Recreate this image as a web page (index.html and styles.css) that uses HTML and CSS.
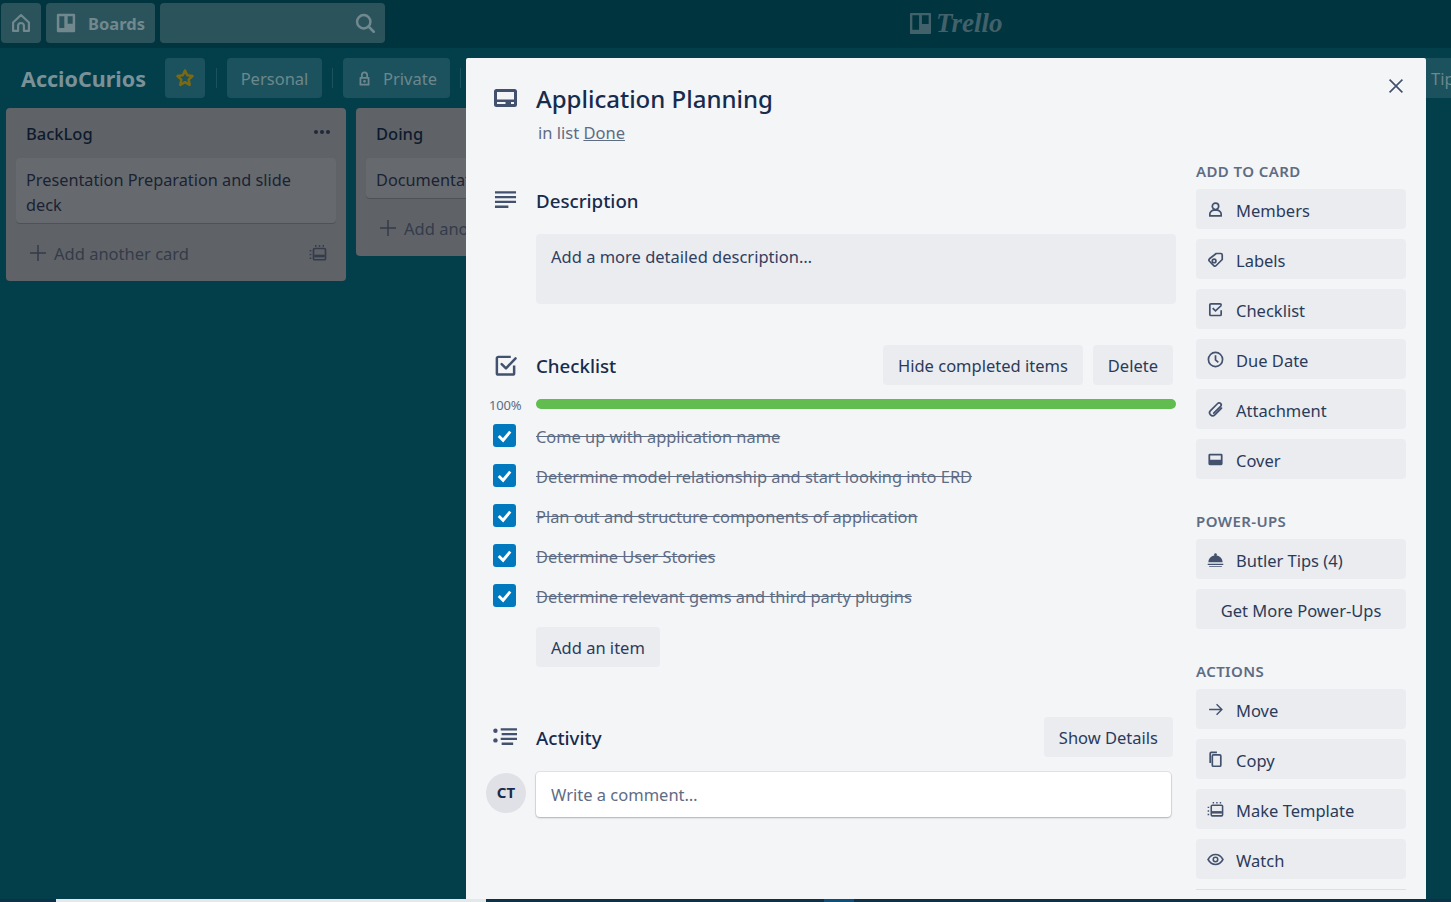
FILE: index.html

```html
<!DOCTYPE html>
<html lang="en">
<head>
  <meta charset="UTF-8">
  <title>Application Planning on AccioCurios | Trello</title>
  <link rel="stylesheet" href="styles.css">
</head>
<body>
  <header class="topbar">
    <div class="topbar-left">
      <a class="top-btn home-btn">
        <svg class="top-icon" viewBox="0 0 24 24" fill="none" stroke="currentColor" stroke-width="2.6"><path d="M2.500 11.500 12 2.500l9.500 9V21.500h-6v-6a3.500 3.500 0 0 0-7 0v6h-6z" stroke-linejoin="round"/></svg>
      </a>
      <a class="top-btn boards-btn">
        <svg class="top-icon" viewBox="0 0 24 24"><path fill="currentColor" fill-rule="evenodd" d="M2.500 1h19A1.500 1.500 0 0 1 23 2.500v19a1.500 1.500 0 0 1-1.500 1.500h-19A1.500 1.500 0 0 1 1 21.500v-19A1.500 1.500 0 0 1 2.500 1zM4 4v14h6V4zm10 0v9h6V4z"/></svg>
        <span>Boards</span>
      </a>
      <div class="top-search">
        <svg class="top-icon" viewBox="0 0 24 24" fill="none" stroke="currentColor" stroke-width="3"><circle cx="10.500" cy="10.500" r="8"/><path d="m16.500 16.500 6 6" stroke-linecap="round"/></svg>
      </div>
    </div>
    <div class="logo">
      <svg class="logo-mark" viewBox="0 0 24 24"><path fill="currentColor" fill-rule="evenodd" d="M2 1h20a1 1 0 0 1 1 1v20a1 1 0 0 1-1 1H2a1 1 0 0 1-1-1V2a1 1 0 0 1 1-1zm1.500 2.500v15h7v-15zm10 0v9h7v-9z"/></svg>
      <span>Trello</span>
    </div>
  </header>

  <div class="board-header">
    <span class="board-name">AccioCurios</span>
    <a class="board-btn star-btn">
      <svg class="star" viewBox="0 0 24 24" fill="none" stroke="currentColor" stroke-width="3"><path d="m12 3 2.700 5.800 6.300.8-4.600 4.300 1.200 6.300L12 17l-5.600 3.200 1.200-6.300L3 9.600l6.300-.8z" stroke-linejoin="round"/></svg>
    </a>
    <span class="board-sep"></span>
    <a class="board-btn personal-btn">Personal</a>
    <span class="board-sep"></span>
    <a class="board-btn private-btn">
      <svg class="lock" viewBox="0 0 24 24"><path fill="currentColor" fill-rule="evenodd" d="M7 10V7a5 5 0 0 1 10 0v3h1a1 1 0 0 1 1 1v10a1 1 0 0 1-1 1H6a1 1 0 0 1-1-1V11a1 1 0 0 1 1-1zm2.500 0h5V7a2.500 2.500 0 0 0-5 0zM7.500 12.500v7h9v-7zM12 14a2 2 0 1 1 0 4 2 2 0 0 1 0-4z"/></svg>
      Private
    </a>
    <span class="board-sep"></span>
    <a class="board-btn tips-btn">Tips</a>
  </div>

  <div class="lists">
    <section class="list">
      <div class="list-head">
        <h3>BackLog</h3>
        <span class="list-dots"><i></i><i></i><i></i></span>
      </div>
      <div class="list-card">Presentation Preparation and slide deck</div>
      <div class="list-foot">
        <svg class="plus" viewBox="0 0 16 16" fill="none" stroke="currentColor" stroke-width="1.500"><path d="M8 0v16M0 8h16"/></svg>
        <span>Add another card</span>
        <svg class="foot-icon" viewBox="0 0 24 24" fill="none" stroke="currentColor" stroke-width="2.200"><rect x="6" y="6" width="16" height="15" rx="1.500"/><path d="M7 16h14" stroke-width="3.500"/><path d="M8 2.500h2m3 0h2m3 0h2M2 8v2m0 3v2m0 3v2"/></svg>
      </div>
    </section>
    <section class="list">
      <div class="list-head">
        <h3>Doing</h3>
      </div>
      <div class="list-card">Documentation</div>
      <div class="list-foot">
        <svg class="plus" viewBox="0 0 16 16" fill="none" stroke="currentColor" stroke-width="1.500"><path d="M8 0v16M0 8h16"/></svg>
        <span>Add another card</span>
      </div>
    </section>
  </div>

  <div class="modal">
    <button class="modal-close" aria-label="Close">
      <svg viewBox="0 0 24 24" fill="none" stroke="currentColor" stroke-width="2"><path d="m5 5 14 14M19 5 5 19" stroke-linecap="square"/></svg>
    </button>

    <div class="card-title">
      <svg class="sec-icon title-icon" viewBox="0 0 23 18"><path fill="currentColor" fill-rule="evenodd" d="M2.500 0h18A2.500 2.500 0 0 1 23 2.500v13a2.500 2.500 0 0 1-2.500 2.500h-18A2.500 2.500 0 0 1 0 15.500v-13A2.500 2.500 0 0 1 2.500 0zM3 3v7.500h17V3zm0 10v2h8.500v-2zm14 0v2h3v-2z"/></svg>
      <div>
        <h2>Application Planning</h2>
        <p class="in-list">in list <a>Done</a></p>
      </div>
    </div>

    <div class="modal-body">
      <main class="modal-main">
        <section class="description">
          <div class="sec-head">
            <svg class="sec-icon" viewBox="0 0 24 24" fill="none" stroke="currentColor" stroke-width="2.400"><path d="M1 3.500h22M1 8.500h22M1 13.500h22M1 18.500h14"/></svg>
            <h3>Description</h3>
          </div>
          <div class="desc-box">Add a more detailed description…</div>
        </section>

        <section class="checklist">
          <div class="sec-head">
            <svg class="sec-icon" viewBox="0 0 24 24" fill="none" stroke="currentColor" stroke-width="2.600"><path d="M21 12v8a1.500 1.500 0 0 1-1.500 1.500h-15A1.500 1.500 0 0 1 3 20V4.500A1.500 1.500 0 0 1 4.500 3h13"/><path d="m8 10.500 4.500 4.500L22.500 4.500" stroke-linecap="round" stroke-linejoin="round"/></svg>
            <h3>Checklist</h3>
            <div class="sec-actions">
              <a class="btn">Hide completed items</a>
              <a class="btn">Delete</a>
            </div>
          </div>
          <div class="progress">
            <span class="progress-num">100%</span>
            <div class="progress-track"></div>
          </div>
          <ul class="items">
            <li><span class="tick"><svg viewBox="0 0 24 24" fill="none" stroke="#fff" stroke-width="3"><path d="m6 12.500 4.500 4.500L18 8"/></svg></span><s>Come up with application name</s></li>
            <li><span class="tick"><svg viewBox="0 0 24 24" fill="none" stroke="#fff" stroke-width="3"><path d="m6 12.500 4.500 4.500L18 8"/></svg></span><s>Determine model relationship and start looking into ERD</s></li>
            <li><span class="tick"><svg viewBox="0 0 24 24" fill="none" stroke="#fff" stroke-width="3"><path d="m6 12.500 4.500 4.500L18 8"/></svg></span><s>Plan out and structure components of application</s></li>
            <li><span class="tick"><svg viewBox="0 0 24 24" fill="none" stroke="#fff" stroke-width="3"><path d="m6 12.500 4.500 4.500L18 8"/></svg></span><s>Determine User Stories</s></li>
            <li><span class="tick"><svg viewBox="0 0 24 24" fill="none" stroke="#fff" stroke-width="3"><path d="m6 12.500 4.500 4.500L18 8"/></svg></span><s>Determine relevant gems and third party plugins</s></li>
          </ul>
          <a class="btn add-item">Add an item</a>
        </section>

        <section class="activity">
          <div class="sec-head">
            <svg class="sec-icon activity-icon" viewBox="0 0 26 24"><circle cx="2.500" cy="5" r="2.300" fill="currentColor"/><circle cx="2.500" cy="15" r="2.300" fill="currentColor"/><path d="M8 3.500h17M9 8.500h16M8 13.500h17M9 18.500h12" stroke="currentColor" stroke-width="2.400" fill="none"/></svg>
            <h3>Activity</h3>
            <div class="sec-actions">
              <a class="btn">Show Details</a>
            </div>
          </div>
          <div class="comment-row">
            <span class="avatar">CT</span>
            <div class="comment-box">Write a comment…</div>
          </div>
        </section>
      </main>

      <aside class="sidebar">
        <h4>ADD TO CARD</h4>
        <a class="side-btn">
          <svg viewBox="0 0 24 24" fill="none" stroke="currentColor" stroke-width="2.400"><circle cx="12" cy="7.500" r="4.500"/><path d="M4 21v-2.500c0-3 3-5.500 6-5.500h4c3 0 6 2.500 6 5.500V21z" stroke-linejoin="round"/></svg>
          Members
        </a>
        <a class="side-btn">
          <svg viewBox="0 0 24 24" fill="none" stroke="currentColor" stroke-width="2.400" stroke-linejoin="round"><path d="M13 3.500h6.500a2 2 0 0 1 2 2V12L13 20.500a2.500 2.500 0 0 1-3.500 0l-6-6a2.500 2.500 0 0 1 0-3.500z"/><circle cx="10" cy="14" r="2.600"/></svg>
          Labels
        </a>
        <a class="side-btn">
          <svg viewBox="0 0 24 24" fill="none" stroke="currentColor" stroke-width="2.400"><path d="M20 13v6a1.500 1.500 0 0 1-1.500 1.500h-13A1.500 1.500 0 0 1 4 19V5.500A1.500 1.500 0 0 1 5.500 4h13A1.500 1.500 0 0 1 20 5.500"/><path d="m8 10 4 4 8.500-8"/></svg>
          Checklist
        </a>
        <a class="side-btn">
          <svg viewBox="0 0 24 24" fill="none" stroke="currentColor" stroke-width="2.400"><circle cx="12" cy="12" r="10"/><path d="M12 6v6.500l4 3.500"/></svg>
          Due Date
        </a>
        <a class="side-btn">
          <svg viewBox="0 0 24 24" fill="none" stroke="currentColor" stroke-width="2.400" stroke-linecap="round"><path d="M20.500 10 11 19.500a4 4 0 0 1-6-6L15 3.500a2.800 2.800 0 0 1 4.200 4L9.500 17"/></svg>
          Attachment
        </a>
        <a class="side-btn">
          <svg viewBox="0 0 24 24"><path fill="currentColor" fill-rule="evenodd" d="M4 4h16a2 2 0 0 1 2 2v12a2 2 0 0 1-2 2H4a2 2 0 0 1-2-2V6a2 2 0 0 1 2-2zm.500 2.500v6h15v-6z"/></svg>
          Cover
        </a>

        <h4>POWER-UPS</h4>
        <a class="side-btn">
          <svg viewBox="0 0 24 24"><path fill="currentColor" d="M12 3a2 2 0 0 1 1.500 3.300C18.500 7 22 11 22 16H2c0-5 3.500-9 8.500-9.700A2 2 0 0 1 12 3zM1 18h22v1.800H1zm2 3h18v1.200H3z"/></svg>
          Butler Tips (4)
        </a>
        <a class="side-btn center">Get More Power-Ups</a>

        <h4>ACTIONS</h4>
        <a class="side-btn">
          <svg viewBox="0 0 24 24" fill="none" stroke="currentColor" stroke-width="2"><path d="M3 12h18M13.500 4.500 21 12l-7.500 7.500"/></svg>
          Move
        </a>
        <a class="side-btn">
          <svg viewBox="0 0 24 24" fill="none" stroke="currentColor" stroke-width="2.400"><rect x="7.500" y="5.500" width="12" height="16" rx="1.500"/><path d="M4.500 17V3.500A1.500 1.500 0 0 1 6 2h8"/></svg>
          Copy
        </a>
        <a class="side-btn">
          <svg viewBox="0 0 24 24" fill="none" stroke="currentColor" stroke-width="2.200"><rect x="6" y="6" width="16" height="15" rx="1.500"/><path d="M7 16h14" stroke-width="3.500"/><path d="M8 2.500h2m3 0h2m3 0h2M2 8v2m0 3v2m0 3v2"/></svg>
          Make Template
        </a>
        <a class="side-btn">
          <svg viewBox="0 0 24 24" fill="none" stroke="currentColor" stroke-width="2.200"><path d="M1.500 12C4 7.500 7.500 5 12 5s8 2.500 10.500 7c-2.500 4.500-6 7-10.500 7s-8-2.500-10.500-7z"/><circle cx="12" cy="12" r="3.200"/></svg>
          Watch
        </a>
        <hr class="side-rule">
      </aside>
    </div>
  </div>

  <div class="bottom-strip">
    <span class="strip-white"></span>
    <span class="strip-dark"></span>
    <span class="strip-blue"></span>
  </div>
</body>
</html>
```

FILE: styles.css

```css
* {
  box-sizing: border-box;
}
html, body {
  height: 100%;
}
body {
  margin: 0;
  overflow: hidden;
  position: relative;
  background: #023f4b;
  font-family: "Noto Sans", "Open Sans", sans-serif;
  font-size: 16.5px;
  color: #172b4d;
}
a {
  text-decoration: none;
}
h2, h3, h4, p, ul {
  margin: 0;
  padding: 0;
}

/* top bar */
.topbar {
  height: 48px;
  background: #00343f;
  padding: 3px 1px;
  position: relative;
}
.topbar-left {
  display: flex;
  gap: 5px;
}
.top-btn, .top-search {
  height: 40px;
  border-radius: 4px;
  background: #2b535c;
  color: #71898e;
  display: flex;
  align-items: center;
}
.home-btn {
  width: 40px;
  justify-content: center;
}
.boards-btn {
  width: 109px;
  padding-left: 10px;
  gap: 12px;
  font-weight: 700;
  font-size: 16.5px;
}
.top-search {
  width: 225px;
  justify-content: flex-end;
  padding-right: 10px;
}
.top-icon {
  width: 20px;
  height: 20px;
}
.logo {
  position: absolute;
  left: 909px;
  top: 7px;
  height: 32px;
  display: flex;
  align-items: center;
  gap: 4px;
  color: #42616a;
  font-family: "Liberation Serif", serif;
  font-style: italic;
  font-weight: 700;
  font-size: 27px;
}
.logo-mark {
  width: 23px;
  height: 23px;
}

/* board header */
.board-header {
  height: 40px;
  margin-top: 10px;
  padding-left: 21px;
  display: flex;
  align-items: center;
  white-space: nowrap;
}
.board-name {
  width: 144px;
  flex: none;
  font-size: 21.5px;
  font-weight: 700;
  color: #7a9197;
}
.board-btn {
  height: 40px;
  flex: none;
  border-radius: 4px;
  background: #1c525d;
  color: #6c878d;
  display: flex;
  align-items: center;
  justify-content: center;
}
.star-btn {
  width: 40px;
  margin-right: 1px;
}
.star {
  width: 20px;
  height: 20px;
  color: #7c6a12;
}
.personal-btn {
  width: 95px;
}
.private-btn {
  width: 107px;
  gap: 10px;
}
.lock {
  width: 17px;
  height: 17px;
}
.tips-btn {
  width: 70px;
  margin-left: 945px;
  justify-content: flex-start;
  padding-left: 15px;
}
.board-sep {
  width: 1px;
  height: 20px;
  flex: none;
  margin: 0 10px;
  background: #1c525d;
}

/* lists */
.lists {
  display: flex;
  align-items: flex-start;
  gap: 10px;
  margin-top: 10px;
  padding-left: 6px;
}
.list {
  width: 340px;
  flex: none;
  padding: 0 10px;
  background: #5f6367;
  border-radius: 4px;
  color: #0e1a2e;
}
.list-head {
  height: 50px;
  padding: 1px 10px 0;
  display: flex;
  align-items: center;
  justify-content: space-between;
}
.list-head h3 {
  font-size: 16.5px;
  font-weight: 500;
}
.list-dots {
  display: flex;
  gap: 2px;
  margin: -3px -4px 0 0;
}
.list-dots i {
  width: 4px;
  height: 4px;
  border-radius: 50%;
  background: #20293a;
}
.list-card {
  padding: 10px 10px 5px;
  background: #666a6e;
  border-radius: 4px;
  box-shadow: 0 1px 0 #4e5256;
  font-size: 16.3px;
  line-height: 25px;
  color: #1a2233;
}
.list-foot {
  height: 58px;
  padding: 2px 9px 0 14px;
  display: flex;
  align-items: center;
  gap: 8px;
  color: #343b4a;
}
.plus {
  width: 16px;
  height: 16px;
  flex: none;
}
.foot-icon {
  width: 18px;
  height: 18px;
  margin-left: auto;
}

/* card modal */
.modal {
  position: absolute;
  left: 466px;
  top: 58px;
  width: 960px;
  height: 841px;
  background: #f4f5f7;
  border-radius: 2px 2px 0 0;
  overflow: hidden;
  padding-left: 28px;
}
.modal-close {
  position: absolute;
  right: 20px;
  top: 18px;
  width: 20px;
  height: 20px;
  padding: 0;
  border: 0;
  background: none;
  color: #42526e;
}
.sec-icon {
  width: 23px;
  height: 23px;
  flex: none;
  color: #42526e;
}
.card-title {
  display: flex;
  gap: 19px;
  padding-top: 28px;
}
.title-icon {
  height: 18px;
  margin-top: 3px;
}
.card-title h2 {
  font-size: 24px;
  font-weight: 500;
  line-height: 28px;
  margin-top: -1px;
}
.in-list {
  margin-top: 7px;
  line-height: 26px;
  padding-left: 2px;
  color: #5e6c84;
}
.in-list a {
  color: #5e6c84;
  text-decoration: underline;
}
.modal-body {
  display: flex;
  padding-right: 20px;
  gap: 20px;
}
.modal-main {
  width: 690px;
  margin-left: -8px;
  flex: none;
}
.sec-head {
  height: 40px;
  display: flex;
  align-items: center;
  padding-left: 8px;
  gap: 19px;
}
.sec-head h3 {
  font-size: 18.7px;
  font-weight: 500;
}
.sec-actions {
  margin-left: auto;
  margin-right: 3px;
  display: flex;
  gap: 10px;
}
.btn {
  height: 40px;
  padding: 0 15px;
  display: inline-flex;
  align-items: center;
  border-radius: 4px;
  background: #ebecf0;
  color: #2a3b5a;
}
.description {
  margin-top: 34px;
}
.desc-box {
  height: 70px;
  margin: 14px 0 0 50px;
  padding: 11px 15px;
  border-radius: 4px;
  background: #ebecf0;
  color: #2f4061;
}
.checklist {
  margin-top: 41px;
}
.progress {
  height: 10px;
  margin-top: 14px;
  display: flex;
  align-items: center;
}
.progress-num {
  width: 50px;
  padding: 2px 0 0 3px;
  font-size: 13px;
  color: #5e6c84;
  letter-spacing: -0.2px;
}
.progress-track {
  flex: 1;
  height: 10px;
  border-radius: 5px;
  background: #61bd4f;
}
.items {
  list-style: none;
  margin-top: 7px;
}
.items li {
  height: 40px;
  display: flex;
  align-items: center;
  gap: 20px;
  padding-left: 7px;
  font-size: 16.4px;
  color: #5e6c84;
}
.tick {
  width: 23px;
  height: 23px;
  flex: none;
  margin-top: -2px;
  border-radius: 3px;
  background: #0079bf;
}
.tick svg {
  display: block;
}
.add-item {
  margin: 11px 0 0 50px;
}
.activity {
  margin-top: 50px;
}
.activity-icon {
  width: 25px;
  margin-left: -1px;
  margin-right: -1px;
}
.comment-row {
  margin-top: 14px;
  display: flex;
  align-items: flex-start;
  gap: 10px;
}
.avatar {
  width: 40px;
  height: 40px;
  margin-top: 2px;
  padding-bottom: 2px;
  flex: none;
  border-radius: 50%;
  background: #dfe1e6;
  display: flex;
  align-items: center;
  justify-content: center;
  font-size: 15px;
  font-weight: 700;
}
.comment-box {
  width: 635px;
  height: 45px;
  margin-top: 1px;
  padding: 0 15px;
  display: flex;
  align-items: center;
  background: #fff;
  border-radius: 4px;
  box-shadow: 0 0 0 1px rgba(9, 30, 66, 0.08), 0 1px 2px rgba(9, 30, 66, 0.25);
  color: #5e6c84;
}

/* right column */
.sidebar {
  width: 210px;
  flex: none;
  margin-top: 12px;
}
.sidebar h4 {
  height: 26px;
  margin: 29px 0 5px;
  font-size: 15px;
  font-weight: 600;
  line-height: 26px;
  color: #5e6c84;
  letter-spacing: 0.4px;
}
.sidebar h4:first-child {
  margin-top: 0;
}
.side-btn {
  height: 40px;
  margin-bottom: 10px;
  padding: 2px 0 0 11px;
  display: flex;
  align-items: center;
  gap: 12px;
  border-radius: 4px;
  background: #ebecf0;
  color: #2a3b5a;
}
.side-btn svg {
  width: 17px;
  height: 17px;
  flex: none;
  margin-top: -2px;
  color: #42526e;
}
.side-btn.center {
  justify-content: center;
  padding-left: 0;
}
.side-rule {
  height: 1px;
  margin: 0;
  border: 0;
  background: #dcdfe4;
}

/* sliver of the page below the window */
.bottom-strip {
  position: absolute;
  left: 0;
  right: 0;
  bottom: 0;
  height: 3px;
  display: flex;
  background: #0d3248;
}
.strip-white {
  width: 430px;
  margin-left: 56px;
  background: #e4e8ea;
}
.strip-dark {
  width: 338px;
}
.strip-blue {
  width: 30px;
  background: #0d4f79;
}
```
